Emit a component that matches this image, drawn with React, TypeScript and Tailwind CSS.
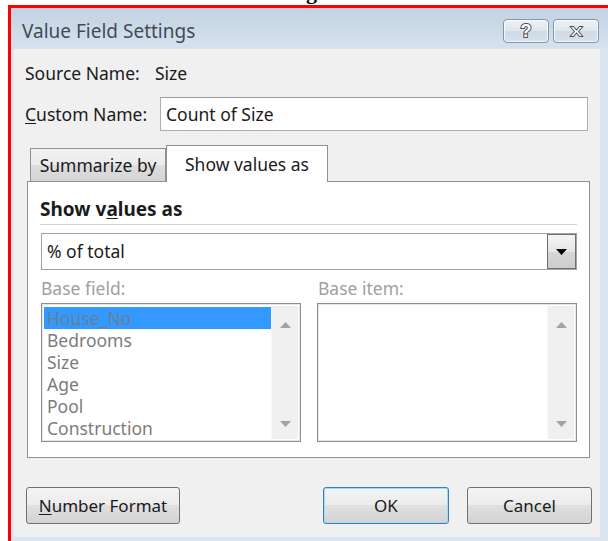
import React from "react";

const items = ["House_No", "Bedrooms", "Size", "Age", "Pool", "Construction"];

function Arrow({ up }: { up?: boolean }) {
  return (
    <svg width="11" height="6" viewBox="0 0 11 6">
      <path d={up ? "M0 6 L5.5 0 L11 6 Z" : "M0 0 L5.5 6 L11 0 Z"} fill="#a3a3a3" />
    </svg>
  );
}

function ScrollTrack() {
  return (
    <div className="w-[27px] bg-[#f0f0f0] border-l border-[#f7f7f7] flex flex-col items-center justify-between pt-[16px] pb-[12px]">
      <Arrow up />
      <Arrow />
    </div>
  );
}

function ListBox({ children }: { children?: React.ReactNode }) {
  return (
    <div className="flex-1 h-[139px] border border-[#8b8e94] shadow-[inset_0_0_0_1px_#e6e6e6] bg-white flex p-[2px]">
      <div className="flex-1 pt-px">{children}</div>
      <ScrollTrack />
    </div>
  );
}

function WinButton({ children, className = "" }: { children: React.ReactNode; className?: string }) {
  return (
    <button
      className={
        "h-[37px] rounded-[3px] border bg-[linear-gradient(#f3f3f3,#ececec_50%,#e0e0e0_50%,#d3d3d3)] text-[17px] text-[#1b1b1b] flex items-center justify-center " +
        className
      }
    >
      {children}
    </button>
  );
}

function TitleButton({ children }: { children: React.ReactNode }) {
  return (
    <div className="w-[46px] h-[24px] rounded-[4px] border border-[#8595ab] bg-[linear-gradient(#eef2f7,#dde5ee_50%,#d0dae6_50%,#d8e2ec)] shadow-[inset_0_0_0_1px_rgba(255,255,255,0.7)] flex items-center justify-center">
      {children}
    </div>
  );
}

export default function App() {
  return (
    <div className="w-[608px] h-[541px] bg-white flex flex-col overflow-hidden font-['Noto_Sans',sans-serif] text-[17.5px] text-[#1b1b1b]">
      {/* tail of the page heading above the dialog */}
      <div className="h-[5px] overflow-hidden pl-[306px]">
        <div className="-mt-[19px] font-['Liberation_Serif',serif] font-bold text-[22px] leading-[22px] text-black">g</div>
      </div>

      <div className="flex-1 ml-[8px] border-l-[3px] border-t-[3px] border-[#ff0000] bg-[#dae5f1] flex flex-col pl-[3px] pr-[8px] pb-[4px]">
        {/* title bar */}
        <div className="h-[41px] -ml-[3px] -mr-[8px] pl-[3px] pr-[8px] bg-[linear-gradient(#c3d2e1,#d6e2ee)] flex items-center pt-[5px]">
          <span className="ml-[8px] text-[19px] text-[#434b55]">Value Field Settings</span>
          <div className="ml-auto mr-px flex gap-[4px]">
            <TitleButton>
              <svg width="14" height="20" viewBox="0 0 14 20">
                <text
                  x="7"
                  y="16"
                  textAnchor="middle"
                  fontFamily="Liberation Sans, sans-serif"
                  fontWeight="bold"
                  fontSize="18"
                  fill="#ffffff"
                  stroke="#505050"
                  strokeWidth="2"
                  paintOrder="stroke"
                >
                  ?
                </text>
              </svg>
            </TitleButton>
            <TitleButton>
              <svg width="17" height="13" viewBox="0 0 17 13">
                <path
                  d="M2 1.5 H5.5 L8.5 5 L11.5 1.5 H15 L10.5 6.5 L15 11.5 H11.5 L8.5 8 L5.5 11.5 H2 L6.5 6.5 Z"
                  fill="#ffffff"
                  stroke="#4f4f4f"
                  strokeWidth="1.1"
                  strokeLinejoin="round"
                />
              </svg>
            </TitleButton>
          </div>
        </div>

        {/* dialog body */}
        <div className="flex-1 bg-[#f0f0f0] flex flex-col">
          <div className="mt-[14px] h-[20px] pl-[11px] flex items-center">
            <span className="w-[130px]">Source Name:</span>
            <span>Size</span>
          </div>

          <div className="mt-[14px] pl-[11px] flex items-center">
            <span className="w-[135px]">
              <span className="underline underline-offset-2">C</span>ustom Name:
            </span>
            <div className="w-[428px] h-[34px] border border-[#abadb3] border-t-[#9a9ca3] bg-white flex items-center pl-[5px]">
              Count of Size
            </div>
          </div>

          {/* tabs */}
          <div className="mt-[14px] pl-[13px] flex items-end h-[36px]">
            <div className="ml-[3px] w-[136px] h-[33px] border border-[#8e9096] border-b-0 bg-[linear-gradient(#f2f2f2,#ebebeb_50%,#dddddd_50%,#d5d5d5)] flex items-center justify-center">
              Summarize by
            </div>
            <div className="w-[162px] h-[37px] -mb-px border border-[#8e9096] border-b-0 bg-white flex items-center justify-center relative z-10">
              Show values as
            </div>
          </div>

          <div className="ml-[13px] mr-[10px] h-[277px] border border-[#8e9096] bg-white flex flex-col px-[12px]">
            <div className="mt-[17px] h-[20px] flex items-center font-bold text-[19px]">
              Show v<span className="underline underline-offset-2">a</span>lues as
            </div>
            <div className="mt-[5px] h-px bg-[#c7d4e1]" />
            <div className="mt-[8px] ml-px h-[37px] border border-[#a2a2a2] bg-white flex items-stretch">
              <span className="flex-1 flex items-center pl-[5px]">% of total</span>
              <div className="w-[29px] border border-[#6f6f6f] bg-[linear-gradient(#f4f4f4,#e6e6e6_50%,#d6d6d6_50%,#cdcdcd)] flex items-center justify-center">
                <svg width="11" height="6" viewBox="0 0 11 6">
                  <path d="M0 0 L5.5 6 L11 0 Z" fill="#000000" />
                </svg>
              </div>
            </div>

            <div className="mt-[8px] ml-px h-[20px] flex items-center text-[#a0a0a0]">
              <span className="w-[277px]">Base field:</span>
              <span>Base item:</span>
            </div>

            <div className="mt-[5px] ml-px flex gap-[16px]">
              <ListBox>
                {items.map((it, i) => (
                  <div
                    key={it}
                    className={
                      "h-[22px] leading-[22px] pl-[3px] " +
                      (i === 0 ? "bg-[#3399ff] text-[#6a7f96]" : "text-[#7c7c7c]")
                    }
                  >
                    {it}
                  </div>
                ))}
              </ListBox>
              <ListBox />
            </div>
          </div>

          {/* bottom buttons */}
          <div className="mt-[29px] flex">
            <WinButton className="ml-[12px] w-[154px] border-[#707070]">
              <span>
                <span className="underline underline-offset-2">N</span>umber Format
              </span>
            </WinButton>
            <WinButton className="ml-[143px] w-[126px] border-[#3c7fb1] shadow-[inset_0_0_0_1px_#9fdcf7]">OK</WinButton>
            <WinButton className="ml-[18px] w-[125px] border-[#707070]">Cancel</WinButton>
          </div>
        </div>
      </div>
    </div>
  );
}
